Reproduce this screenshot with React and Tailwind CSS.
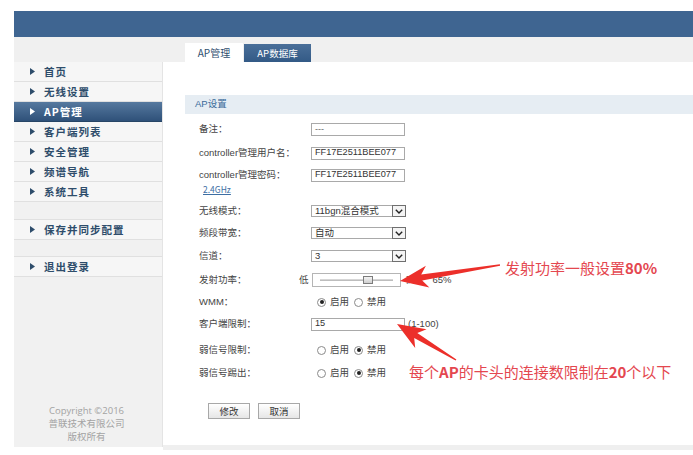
import React from "react";

const navTop = ["首页", "无线设置", "AP管理", "客户端列表", "安全管理", "频谱导航", "系统工具"];

function Tri({ white }) {
  return (
    <svg width="5" height="7" viewBox="0 0 5 7" className="shrink-0">
      <path d="M0 0 L5 3.5 L0 7 Z" fill={white ? "#ffffff" : "#2e4d6b"} />
    </svg>
  );
}

function NavItem({ label, active }) {
  return (
    <div
      className={
        "h-[20px] flex items-center pl-[16px] gap-[9px] border-b text-[10.5px] font-bold tracking-[1px] " +
        (active
          ? "bg-gradient-to-b from-[#56799f] to-[#2f5179] border-[#274566] text-white"
          : "bg-[#f6f6f6] border-[#e0e0e0] text-[#2e4d6b]")
      }
    >
      <Tri white={active} />
      <span>{label}</span>
    </div>
  );
}

function Input({ value, small }) {
  return (
    <div className="w-[94px] h-[13px] border border-[#a9a9a9] bg-white flex items-center pl-[3px] overflow-hidden">
      <span className={small ? "text-[9px] text-[#666] leading-none" : "text-[9.2px] text-[#333] leading-none whitespace-nowrap"}>{value}</span>
    </div>
  );
}

function Select({ value }) {
  return (
    <div className="w-[95px] h-[12px] border border-[#a9a9a9] bg-white flex items-center justify-between pl-[3px]">
      <span className="text-[9.5px] text-[#333] leading-none">{value}</span>
      <div className="w-[14px] h-[12px] border border-[#6f6f6f] bg-[#f4f4f4] flex items-center justify-center -mr-px">
        <svg width="8" height="5" viewBox="0 0 8 5">
          <path d="M0.8 0.8 L4 4 L7.2 0.8" fill="none" stroke="#222" strokeWidth="1.4" />
        </svg>
      </div>
    </div>
  );
}

function Radio({ checked }) {
  return (
    <span className="w-[9px] h-[9px] rounded-full border border-[#8a8a8a] bg-white flex items-center justify-center shrink-0">
      {checked && <span className="w-[4px] h-[4px] rounded-full bg-[#222]" />}
    </span>
  );
}

function Radios({ first }) {
  return (
    <div className="flex items-center text-[9.5px] text-[#444] pl-[6px]">
      <Radio checked={first} />
      <span className="ml-[4px]">启用</span>
      <span className="ml-[5px]"><Radio checked={!first} /></span>
      <span className="ml-[4px]">禁用</span>
    </div>
  );
}

function Row({ label, mt, h = 20, lw = 112, children }) {
  return (
    <div className="flex items-center" style={{ marginTop: mt, height: h }}>
      <div className="shrink-0 text-[9.5px] text-[#444]" style={{ width: lw }}>{label}</div>
      {children}
    </div>
  );
}

function arrowPts(tail, tip, wt, ws, hl, hw) {
  const dx = tip[0] - tail[0];
  const dy = tip[1] - tail[1];
  const len = Math.hypot(dx, dy);
  const ux = dx / len, uy = dy / len;
  const nx = -uy, ny = ux;
  const neck = [tip[0] - ux * hl, tip[1] - uy * hl];
  const back = [tip[0] - ux * (hl - 6), tip[1] - uy * (hl - 6)];
  const p = (b, s) => [b[0] + nx * s, b[1] + ny * s];
  const pts = [
    p(tail, wt / 2),
    p(back, ws / 2),
    p(neck, hw / 2),
    tip,
    p(neck, -hw / 2),
    p(back, -ws / 2),
    p(tail, -wt / 2),
  ];
  return pts.map((q) => q[0].toFixed(1) + "," + q[1].toFixed(1)).join(" ");
}

export default function App() {
  return (
    <div className="relative w-[693px] h-[455px] overflow-hidden bg-white font-['Liberation_Sans','Noto_Sans_CJK_SC',sans-serif]">
      <div className="pt-[11px] pl-[14px]">
        {/* header */}
        <div className="h-[26px] bg-[#3f6591]" />
        {/* tab bar */}
        <div className="h-[25px] bg-[#f0f0f0] flex items-end pl-[171px]">
          <div className="w-[58px] h-[19px] bg-white flex items-center justify-center text-[10px] text-[#2f4f6f] font-['Noto_Sans_CJK_SC',sans-serif]">
            AP管理
          </div>
          <div className="ml-[1px] w-[67px] h-[18px] bg-gradient-to-b from-[#4a6f99] to-[#335a86] flex items-center justify-center text-[9.5px] text-white font-['Noto_Sans_CJK_SC',sans-serif]">
            AP数据库
          </div>
        </div>
        {/* body */}
        <div className="flex h-[393px]">
          {/* sidebar */}
          <div className="w-[149px] h-[385px] bg-[#f1f1f1] border-r border-[#e4e4e4] flex flex-col font-['Noto_Sans_CJK_SC',sans-serif]">
            {navTop.map((l) => (
              <NavItem key={l} label={l} active={l === "AP管理"} />
            ))}
            <div className="h-[18px] border-b border-[#e0e0e0]" />
            <NavItem label="保存并同步配置" />
            <div className="h-[17px] border-b border-[#e0e0e0]" />
            <NavItem label="退出登录" />
            <div className="mt-auto pb-[4px] pr-[3px] text-center text-[9.5px] leading-[13px] text-[#a3a3a3]">
              <div className="font-['Open_Sans',sans-serif]">Copyright ©2016</div>
              <div>普联技术有限公司</div>
              <div>版权所有</div>
            </div>
          </div>
          {/* main */}
          <div className="flex-1 flex flex-col">
            <div className="mt-[33px] ml-[22px] h-[19px] bg-[#e6edf3] flex items-center pl-[10px] text-[9.5px] text-[#3a6b9a]">
              AP设置
            </div>
            <div className="ml-[36px] flex flex-col">
              <Row label="备注：" mt={5}>
                <Input value="---" small />
              </Row>
              <Row label="controller管理用户名：" mt={4}>
                <Input value="FF17E2511BEE077" />
              </Row>
              <Row label="controller管理密码：" mt={2}>
                <Input value="FF17E2511BEE077" />
              </Row>
              <div className="h-[8px] flex items-center pl-[4px]">
                <span className="text-[8.5px] text-[#3d6ea3] underline font-['Noto_Sans_CJK_SC',sans-serif]">2.4GHz</span>
              </div>
              <Row label="无线模式：" mt={8}>
                <Select value="11bgn混合模式" />
              </Row>
              <Row label="频段带宽：" mt={2}>
                <Select value="自动" />
              </Row>
              <Row label="信道：" mt={3}>
                <Select value="3" />
              </Row>
              <Row label="发射功率：" mt={4} lw={100}>
                <span className="text-[9.5px] text-[#444] w-[13px]">低</span>
                <div className="relative w-[89px] h-[14px] border border-[#b5b5b5] bg-white flex items-center px-[7px]">
                  <div className="w-full h-[2px] bg-[#d6d6d6] border-b border-[#bdbdbd]" />
                  <div className="absolute left-[50px] top-[2px] w-[10px] h-[8px] border border-[#7c7c7c] bg-gradient-to-b from-[#f4f4f4] to-[#cfcfcf]" />
                </div>
                <span className="ml-[5px] text-[9.5px] text-[#444]">高</span>
                <span className="ml-[17px] text-[9.5px] text-[#444]">65%</span>
              </Row>
              <Row label="WMM：" mt={2}>
                <Radios first />
              </Row>
              <Row label="客户端限制：" mt={2}>
                <Input value="15" />
                <span className="ml-[3px] text-[9.5px] text-[#444]">(1-100)</span>
              </Row>
              <Row label="弱信号限制：" mt={6}>
                <Radios first={false} />
              </Row>
              <Row label="弱信号踢出：" mt={3}>
                <Radios first={false} />
              </Row>
              <div className="mt-[20px] flex gap-[8px] pl-[9px] font-['Noto_Sans_CJK_SC',sans-serif]">
                <div className="w-[42px] h-[16px] border border-[#a8a8a8] bg-gradient-to-b from-white to-[#e6e6e6] flex items-center justify-center text-[9.5px] text-[#333]">修改</div>
                <div className="w-[42px] h-[16px] border border-[#a8a8a8] bg-gradient-to-b from-white to-[#e6e6e6] flex items-center justify-center text-[9.5px] text-[#333]">取消</div>
              </div>
            </div>
            <div className="mt-auto mb-[5px] h-[5px] bg-[#efefef]" />
          </div>
        </div>
      </div>

      {/* annotations overlay */}
      <svg className="absolute inset-0 pointer-events-none" width="693" height="455">
        <polygon points={arrowPts([500, 265], [400, 281], 1.5, 6, 28, 22)} fill="#ec2f2a" />
        <polygon points={arrowPts([456, 360], [397, 324], 1.5, 6, 28, 22)} fill="#ec2f2a" />
      </svg>
      <div className="absolute left-[505px] top-[258px] text-[15px] leading-[20px] text-[#e4474f] font-['Noto_Sans_CJK_SC',sans-serif] whitespace-nowrap">
        发射功率一般设置<span className="font-bold">80%</span>
      </div>
      <div className="absolute left-[409px] top-[362px] text-[15px] leading-[20px] text-[#e4474f] font-['Noto_Sans_CJK_SC',sans-serif] whitespace-nowrap">
        每个<span className="font-bold">AP</span>的卡头的连接数限制在<span className="font-bold">20</span>个以下
      </div>
    </div>
  );
}
